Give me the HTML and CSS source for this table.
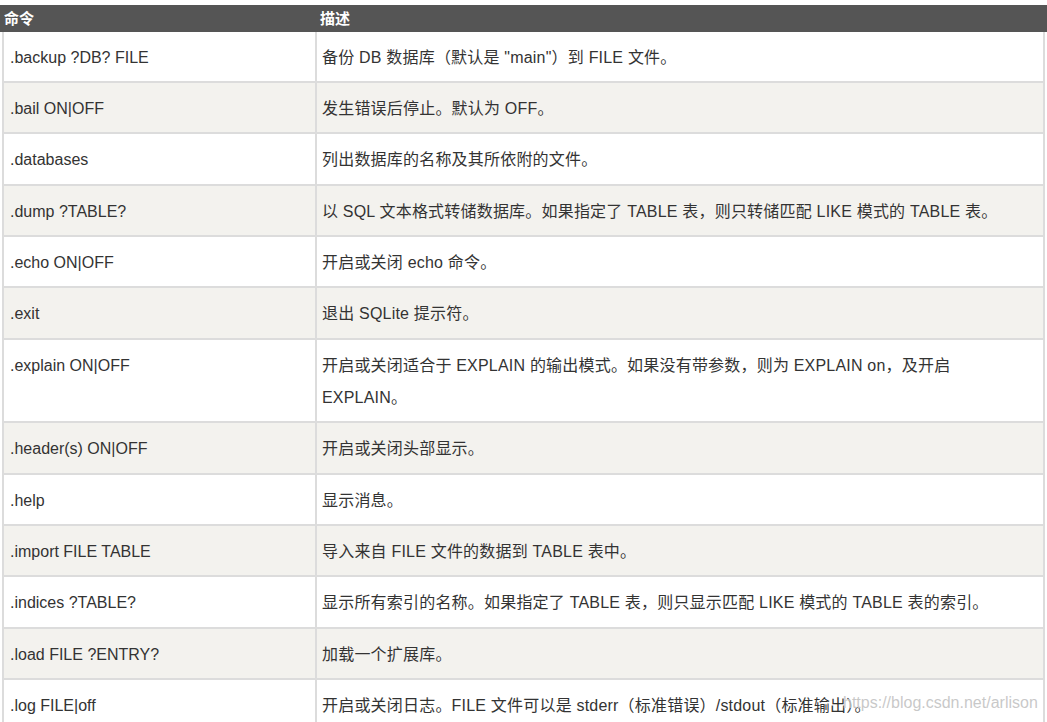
FILE: index.html
```html
<!DOCTYPE html>
<html lang="zh-CN">
<head>
<meta charset="utf-8">
<title>SQLite 点命令</title>
<link rel="stylesheet" href="styles.css">
</head>
<body>
<div class="table">
  <div class="head">
    <div class="hcell">命令</div>
    <div class="hcell hdesc">描述</div>
  </div>
  <div class="row"><div class="cmd">.backup ?DB? FILE</div><div class="desc">备份 DB 数据库（默认是 "main"）到 FILE 文件。</div></div>
  <div class="row alt"><div class="cmd">.bail ON|OFF</div><div class="desc">发生错误后停止。默认为 OFF。</div></div>
  <div class="row"><div class="cmd">.databases</div><div class="desc">列出数据库的名称及其所依附的文件。</div></div>
  <div class="row alt"><div class="cmd">.dump ?TABLE?</div><div class="desc">以 SQL 文本格式转储数据库。如果指定了 TABLE 表，则只转储匹配 LIKE 模式的 TABLE 表。</div></div>
  <div class="row"><div class="cmd">.echo ON|OFF</div><div class="desc">开启或关闭 echo 命令。</div></div>
  <div class="row alt"><div class="cmd">.exit</div><div class="desc">退出 SQLite 提示符。</div></div>
  <div class="row"><div class="cmd">.explain ON|OFF</div><div class="desc">开启或关闭适合于 EXPLAIN 的输出模式。如果没有带参数，则为 EXPLAIN on，及开启<br>EXPLAIN。</div></div>
  <div class="row alt"><div class="cmd">.header(s) ON|OFF</div><div class="desc">开启或关闭头部显示。</div></div>
  <div class="row"><div class="cmd">.help</div><div class="desc">显示消息。</div></div>
  <div class="row alt"><div class="cmd">.import FILE TABLE</div><div class="desc">导入来自 FILE 文件的数据到 TABLE 表中。</div></div>
  <div class="row"><div class="cmd">.indices ?TABLE?</div><div class="desc">显示所有索引的名称。如果指定了 TABLE 表，则只显示匹配 LIKE 模式的 TABLE 表的索引。</div></div>
  <div class="row alt"><div class="cmd">.load FILE ?ENTRY?</div><div class="desc">加载一个扩展库。</div></div>
  <div class="row"><div class="cmd">.log FILE|off</div><div class="desc">开启或关闭日志。FILE 文件可以是 stderr（标准错误）/stdout（标准输出）。</div></div>
</div>
<div class="watermark">https://blog.csdn.net/arlison</div>
</body>
</html>
```
FILE: styles.css
```css
html, body {
  margin: 0;
  padding: 0;
  background: #ffffff;
  overflow: hidden;
  height: 722px;
}
body {
  padding-top: 5px;
  font-family: "Liberation Sans", "Noto Sans CJK SC", sans-serif;
  font-size: 16px;
  color: #333333;
  position: relative;
}
.table {
  width: 1047px;
}
.head {
  display: grid;
  grid-template-columns: 317px 1fr;
  background: #555555;
  height: 26.7px;
  align-items: center;
}
.hcell {
  color: #ffffff;
  font-weight: bold;
  font-size: 15px;
  line-height: 26px;
  padding-left: 4px;
  font-family: "Noto Sans CJK SC", sans-serif;
}
.hdesc {
  padding-left: 3px;
}
.row {
  display: grid;
  grid-template-columns: 313px 1fr;
  margin: 0 2px 0 2px;
  border-left: 2px solid #dcdcdc;
  border-right: 2px solid #dcdcdc;
  border-bottom: 2px solid #dcdcdc;
  background: #ffffff;
}
.row.alt {
  background: #f3f2ee;
}
.cmd, .desc {
  padding: 10px 6px 7.15px 6px;
  line-height: 32.2px;
  white-space: nowrap;
}
.cmd {
  border-right: 2px solid #dcdcdc;
}
.desc {
  padding-left: 5px;
  letter-spacing: 0.2px;
}
.watermark {
  position: absolute;
  left: 843px;
  top: 694px;
  font-family: "Liberation Sans", sans-serif;
  font-size: 16px;
  color: rgba(190, 190, 190, 0.85);
  text-shadow: 0 0 1px rgba(255,255,255,0.6);
}
```
